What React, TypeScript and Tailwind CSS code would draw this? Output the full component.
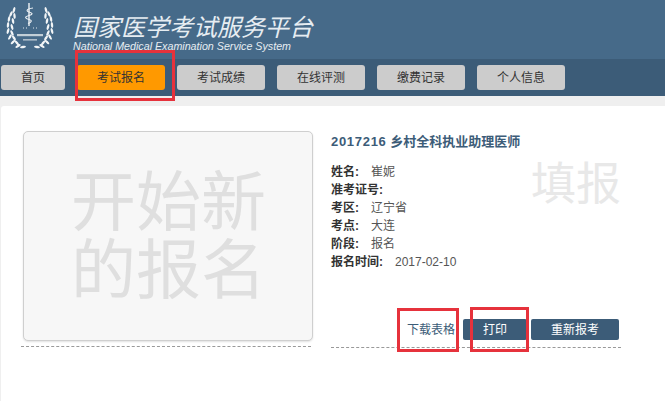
const cjk = "font-['Liberation_Sans','Noto_Sans_CJK_SC',sans-serif]"

const navItems = ['首页', '考试报名', '考试成绩', '在线评测', '缴费记录', '个人信息']

const info = [
  { label: '姓名:', value: '崔妮' },
  { label: '准考证号:', value: '' },
  { label: '考区:', value: '辽宁省' },
  { label: '考点:', value: '大连' },
  { label: '阶段:', value: '报名' },
  { label: '报名时间:', value: '2017-02-10' },
]

// leaf positions along the left branch: x, y, angle
const leaves = [
  [14, 10, -75], [11, 14, -65], [14.5, 16, -95], [9, 19, -80], [13, 21, -100], [8, 25, -85], [12, 27, -105],
  [8, 31, -75], [12, 33, -115], [10, 37, -60], [14, 38, -125], [13, 42, -45], [17, 43, -130], [18, 46, -30], [23, 47, -10],
]

function Logo() {
  return (
    <svg width="60" height="52" viewBox="0 0 60 52" className="shrink-0">
      {leaves.map(([x, y, r]) => (
        <g key={`${x}-${y}`}>
          <ellipse cx={x} cy={y} rx="3" ry="1.2" fill="#f2f5f7" transform={`rotate(${r} ${x} ${y})`} />
          <ellipse cx={60 - x} cy={y} rx="3" ry="1.2" fill="#f2f5f7" transform={`rotate(${-r} ${60 - x} ${y})`} />
        </g>
      ))}
      <path d="M29 3v23" stroke="#eef2f5" strokeWidth="1.4" />
      <path d="M33 8c-7 1-7 3-4 4s5 2 0 3.5-4 3 0 4 2 3-1 4" fill="none" stroke="#eef2f5" strokeWidth="1.1" />
      <path d="M23 28h1M26 28h1M33 28h1M36 28h1" stroke="#dfe6eb" strokeWidth="1" />
      <rect x="17" y="34" width="26" height="2.2" fill="#d8e0e6" opacity="0.85" />
      <rect x="23" y="39" width="14" height="1.6" fill="#d8e0e6" opacity="0.7" />
    </svg>
  )
}

export default function App() {
  return (
    <div className={`relative w-[665px] h-[401px] overflow-hidden bg-[#efefef] ${cjk}`}>
      <header className="h-[59px] bg-[#466a89] flex items-start">
        <Logo />
        <div className="ml-[13px] flex flex-col">
          <div className="text-[24px] leading-[30px] mt-[13px] italic text-[#e6edf2] whitespace-nowrap">国家医学考试服务平台</div>
          <div className="text-[10.7px] leading-[12px] -mt-[3px] italic text-[#e6edf2] whitespace-nowrap">National Medical Examination Service System</div>
        </div>
      </header>

      <nav className="h-[37px] bg-[#3c5c78] pt-[6px] pl-[1px] flex gap-[12px]">
        {navItems.map((item, i) => (
          <div
            key={item}
            className={`h-[25px] rounded-[3px] flex items-center justify-center text-[12px] text-[#333] ${i === 0 ? 'w-[64px]' : 'w-[88px]'} ${i === 1 ? 'bg-[#ff9900]' : 'bg-[#cccccc]'}`}
          >
            {item}
          </div>
        ))}
      </nav>

      <main className="mt-[10px] ml-[1px] h-[295px] bg-white rounded-tl-[3px] flex pl-[20px] pt-[25px] relative">
        <div className="w-[292px] shrink-0">
          <div className="ml-[2px] w-[290px] h-[210px] bg-[#f7f7f7] border border-[#cfcfcf] rounded-[5px] shadow-[0_1px_2px_rgba(0,0,0,0.12)] text-[#dfdfdf] text-[65px] leading-[68px] pl-[47px] pt-[37px]">
            开始新<br />的报名
          </div>
          <div className="mt-[5px] border-t border-dashed border-[#999] w-[290px]" />
        </div>

        <section className="ml-[18px] w-[290px] flex flex-col">
          <h2 className="mt-[3px] text-[13px] leading-[16px] font-bold text-[#3c5c78] whitespace-nowrap">
            <span className="tracking-[0.7px]">2017216</span> 乡村全科执业助理医师
          </h2>
          <dl className="mt-[13px] text-[12px] leading-[18px] text-[#444]">
            {info.map((row) => (
              <div key={row.label} className="flex h-[18px]">
                <dt className="font-bold text-[#333]">{row.label}</dt>
                <dd className="ml-[12px] text-[#555]">{row.value}</dd>
              </div>
            ))}
          </dl>
          <div className="absolute left-[530px] top-[52px] text-[45px] leading-[54px] text-[#e8e8e8]">填报</div>
          <div className="mt-[48px] flex justify-end items-center h-[21px] pr-[2px]">
            <span className="text-[12px] text-[#3c5c78] mr-[8px]">下载表格</span>
            <button className="w-[64px] h-[21px] rounded-[2px] bg-[#3c5c78] text-white text-[12px] mr-[4px]">打印</button>
            <button className="w-[88px] h-[21px] rounded-[2px] bg-[#3c5c78] text-white text-[12px]">重新报考</button>
          </div>
          <div className="mt-[7px] border-t border-dashed border-[#999]" />
        </section>
      </main>

      <div className="absolute left-[75px] top-[50px] w-[100px] h-[51px] border-[3px] border-[#e6323c]" />
      <div className="absolute left-[397px] top-[308px] w-[62px] h-[44px] border-[3px] border-[#e6323c]" />
      <div className="absolute left-[470px] top-[307px] w-[59px] h-[45px] border-[3px] border-[#e6323c]" />
    </div>
  )
}
